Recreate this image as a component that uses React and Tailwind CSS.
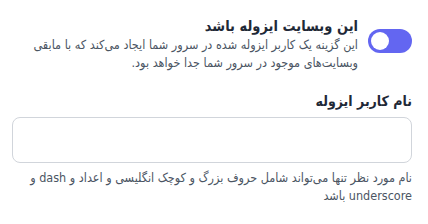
import React, { useState } from 'react';

function App() {
  const [isolated, setIsolated] = useState(true);
  const [username, setUsername] = useState("");

  return (
    <main dir="rtl" className="w-[428px] h-[224px] bg-white pr-4 pl-3 pt-[16px] overflow-hidden" style={{ fontFamily: '"DejaVu Sans Condensed", "DejaVu Sans", sans-serif' }}>
      {/* Isolation toggle */}
      <div className="flex items-start gap-[10px]">
        <button
          type="button"
          onClick={() => setIsolated(!isolated)}
          className={`mt-[13px] shrink-0 w-[44px] h-[24px] rounded-full flex items-center px-[3px] ${isolated ? 'bg-[#6366f1] justify-end' : 'bg-gray-300 justify-start'}`}
        >
          <span className="w-[18px] h-[18px] rounded-full bg-white block"></span>
        </button>
        <div className="flex flex-col">
          <h3 className="text-[14.5px] font-bold text-[#1f2937] leading-[20px]">این وبسایت ایزوله باشد</h3>
          <p className="text-[12.5px] text-[#4b5563] leading-[18px]">
            این گزینه یک کاربر ایزوله شده در سرور شما ایجاد می‌کند که با مابقی وبسایت‌های موجود در سرور شما جدا خواهد بود.
          </p>
        </div>
      </div>

      {/* Isolated username */}
      <div className="mt-[19px] flex flex-col">
        <label className="text-[14px] font-bold text-[#1f2937] leading-[20px]">نام کاربر ایزوله</label>
        <input
          type="text"
          value={username}
          onChange={(e) => setUsername(e.target.value)}
          className="mt-[6px] h-[46px] w-full rounded-lg border border-[#d1d5db] bg-white px-3 text-sm focus:outline-none"
        />
        <p className="mt-[6px] text-[12.5px] text-[#4b5563] leading-[18px]">
          نام مورد نظر تنها می‌تواند شامل حروف بزرگ و کوچک انگلیسی و اعداد و dash و underscore باشد
        </p>
      </div>
    </main>
  );
}

export default App;
